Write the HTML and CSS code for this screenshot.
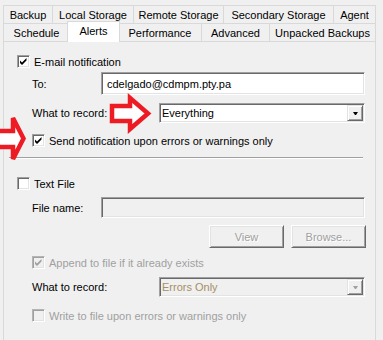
FILE: index.html
```html
<!DOCTYPE html>
<html>
<head>
<meta charset="utf-8">
<link rel="stylesheet" href="styles.css">
</head>
<body>
<div class="tabs">
  <div class="tab-row">
    <div class="tab w-backup">Backup</div>
    <div class="tab w-local">Local Storage</div>
    <div class="tab w-remote">Remote Storage</div>
    <div class="tab w-secondary">Secondary Storage</div>
    <div class="tab w-agent">Agent</div>
  </div>
  <div class="tab-row">
    <div class="tab w-schedule">Schedule</div>
    <div class="tab tab-selected w-alerts">Alerts</div>
    <div class="tab w-performance">Performance</div>
    <div class="tab w-advanced">Advanced</div>
    <div class="tab w-unpacked">Unpacked Backups</div>
  </div>
</div>

<div class="panel">
  <div class="check-row">
    <span class="cb"><svg width="11" height="11" viewBox="0 0 11 11"><polygon points="2,4.5 4,6.5 8.5,2 8.5,4.5 4,9 2,7" fill="#000"/></svg></span>
    <span>E-mail notification</span>
  </div>
  <div class="field mt-4">
    <span class="lbl lbl-short">To:</span>
    <div class="textbox">cdelgado@cdmpm.pty.pa</div>
  </div>
  <div class="field mt-8">
    <span class="lbl lbl-long">What to record:</span>
    <div class="combo">
      <span class="combo-text">Everything</span>
      <span class="combo-btn"><svg width="5" height="3" viewBox="0 0 5 3"><polygon points="0,0 5,0 3,3 2,3" fill="#000"/></svg></span>
    </div>
  </div>
  <div class="check-row indent mt-11">
    <span class="cb"><svg width="11" height="11" viewBox="0 0 11 11"><polygon points="2,4.5 4,6.5 8.5,2 8.5,4.5 4,9 2,7" fill="#000"/></svg></span>
    <span>Send notification upon errors or warnings only</span>
  </div>

  <div class="separator"></div>

  <div class="check-row mt-18">
    <span class="cb"></span>
    <span>Text File</span>
  </div>
  <div class="field mt-7">
    <span class="lbl lbl-short">File name:</span>
    <div class="textbox textbox-disabled file-box"></div>
  </div>
  <div class="buttons mt-7">
    <div class="btn">View</div>
    <div class="btn">Browse...</div>
  </div>
  <div class="check-row indent mt-8 disabled">
    <span class="cb cb-disabled"><svg width="11" height="11" viewBox="0 0 11 11"><polygon points="2,4.5 4,6.5 8.5,2 8.5,4.5 4,9 2,7" fill="#a0a0a0"/></svg></span>
    <span>Append to file if it already exists</span>
  </div>
  <div class="field mt-8">
    <span class="lbl lbl-long">What to record:</span>
    <div class="combo combo-disabled">
      <span class="combo-text">Errors Only</span>
      <span class="combo-btn"><svg width="5" height="3" viewBox="0 0 5 3"><polygon points="0,0 5,0 3,3 2,3" fill="#a0a0a0"/></svg></span>
    </div>
  </div>
  <div class="check-row indent mt-12 disabled">
    <span class="cb cb-disabled"></span>
    <span>Write to file upon errors or warnings only</span>
  </div>
</div>

<svg class="arrow arrow-one" width="48" height="42" viewBox="0 0 48 42">
  <polygon points="4,13 22,13 22,5 40,20.5 22,36 22,28 4,28" fill="#fff" stroke="#ed1c24" stroke-width="4.5" stroke-linejoin="miter"/>
</svg>
<svg class="arrow arrow-two" width="30" height="52" viewBox="0 0 30 52">
  <polygon points="-6,19 13,19 13,6 23.5,26.5 13,47 13,35 -6,35" fill="#fff" stroke="#ed1c24" stroke-width="4.5" stroke-linejoin="miter"/>
</svg>
</body>
</html>
```

FILE: styles.css
```css
* { box-sizing: border-box; }
html, body { margin: 0; padding: 0; }
body {
  position: relative;
  width: 383px;
  height: 340px;
  overflow: hidden;
  background: #f0f0f0;
  font-family: "Liberation Sans", Arial, sans-serif;
  font-size: 11px;
  color: #000;
}

/* ---- tabs ---- */
.tabs { padding: 5px 0 0 3px; }
.tab-row { display: flex; align-items: flex-start; height: 18px; }
.tab {
  flex: none;
  height: 18px;
  display: flex;
  align-items: center;
  justify-content: center;
  white-space: nowrap;
  background: #f0f0f0;
  border-top: 1px solid #d9d9d9;
  border-left: 1px solid #d9d9d9;
}
.tab:last-child { border-right: 1px solid #d9d9d9; }
.tab-selected {
  position: relative;
  z-index: 1;
  height: 21px;
  margin: -2px -2px 0 -2px;
  padding-bottom: 2px;
  background: #fff;
  border-right: 1px solid #d9d9d9;
}
.w-backup { width: 49px; }
.w-local { width: 81px; }
.w-remote { width: 90px; }
.w-secondary { width: 110px; }
.w-agent { width: 43px; }
.w-schedule { width: 66px; }
.w-alerts { width: 53px; }
.w-performance { width: 83px; }
.w-advanced { width: 68px; }
.w-unpacked { width: 107px; }

/* ---- panel ---- */
.panel {
  margin-left: 3px;
  width: 373px;
  height: 300px;
  border: 1px solid #d9d9d9;
  border-bottom: none;
  padding: 13px 10px 0 13px;
}

.mt-4 { margin-top: 4px; }
.mt-7 { margin-top: 7px; }
.mt-8 { margin-top: 8px; }
.mt-11 { margin-top: 11px; }
.mt-12 { margin-top: 12px; }
.mt-18 { margin-top: 18px; }

.check-row {
  display: flex;
  align-items: center;
  gap: 4px;
  height: 13px;
  white-space: nowrap;
}
.indent { margin-left: 15px; }
.disabled { color: #a0a0a0; }

.cb {
  flex: none;
  width: 13px;
  height: 13px;
  background: #fff;
  border: 1px solid;
  border-color: #a0a0a0 #fff #fff #a0a0a0;
  box-shadow: inset 1px 1px 0 #696969, inset -1px -1px 0 #e3e3e3;
}
.cb svg { display: block; }
.cb-disabled {
  background: #f0f0f0;
  border-color: #b4b4b4 #fff #fff #b4b4b4;
  box-shadow: inset 1px 1px 0 #a0a0a0, inset -1px -1px 0 #e3e3e3;
}

.field {
  display: flex;
  align-items: center;
  margin-left: 15px;
}
.lbl { flex: none; white-space: nowrap; }
.lbl-short { width: 69px; }
.lbl-long { width: 127px; }

.textbox {
  flex: 1;
  height: 23px;
  display: flex;
  align-items: center;
  padding: 0 5px;
  background: #fff;
  border: 1px solid;
  border-color: #a0a0a0 #fff #fff #a0a0a0;
  box-shadow: inset 1px 1px 0 #696969, inset -1px -1px 0 #e3e3e3;
  white-space: nowrap;
}
.file-box { height: 21px; }
.textbox-disabled { background: #f0f0f0; }

.combo {
  flex: 1;
  height: 20px;
  display: flex;
  align-items: center;
  padding: 1px 1px 1px 2px;
  background: #fff;
  border: 1px solid;
  border-color: #a0a0a0 #fff #fff #a0a0a0;
  box-shadow: inset 1px 1px 0 #696969, inset -1px -1px 0 #e3e3e3;
}
.combo-text { flex: 1; white-space: nowrap; }
.combo-disabled { background: #f0f0f0; color: #a58f64; }
.combo-btn {
  flex: none;
  width: 16px;
  height: 16px;
  display: flex;
  align-items: center;
  justify-content: center;
  background: #f0f0f0;
  border: 1px solid;
  border-color: #e3e3e3 #696969 #696969 #e3e3e3;
  box-shadow: inset 1px 1px 0 #fff, inset -1px -1px 0 #a0a0a0;
}
.combo-btn svg { display: block; margin-top: 1px; }

.separator {
  height: 2px;
  margin: 10px 2px 0 -8px;
  border-top: 1px solid #a0a0a0;
  border-bottom: 1px solid #fff;
}

.buttons {
  display: flex;
  justify-content: flex-end;
  gap: 7px;
  margin-right: -1px;
}
.btn {
  width: 75px;
  height: 23px;
  display: flex;
  align-items: center;
  justify-content: center;
  color: #a0a0a0;
  text-shadow: 1px 1px 0 #fff;
  background: #f0f0f0;
  border: 1px solid;
  border-color: #fff #696969 #696969 #fff;
  box-shadow: inset 1px 1px 0 #e3e3e3, inset -1px -1px 0 #a0a0a0;
}

/* ---- annotation arrows ---- */
.arrow { position: absolute; display: block; }
.arrow-one { left: 108px; top: 93px; }
.arrow-two { left: 0; top: 112px; }
```
